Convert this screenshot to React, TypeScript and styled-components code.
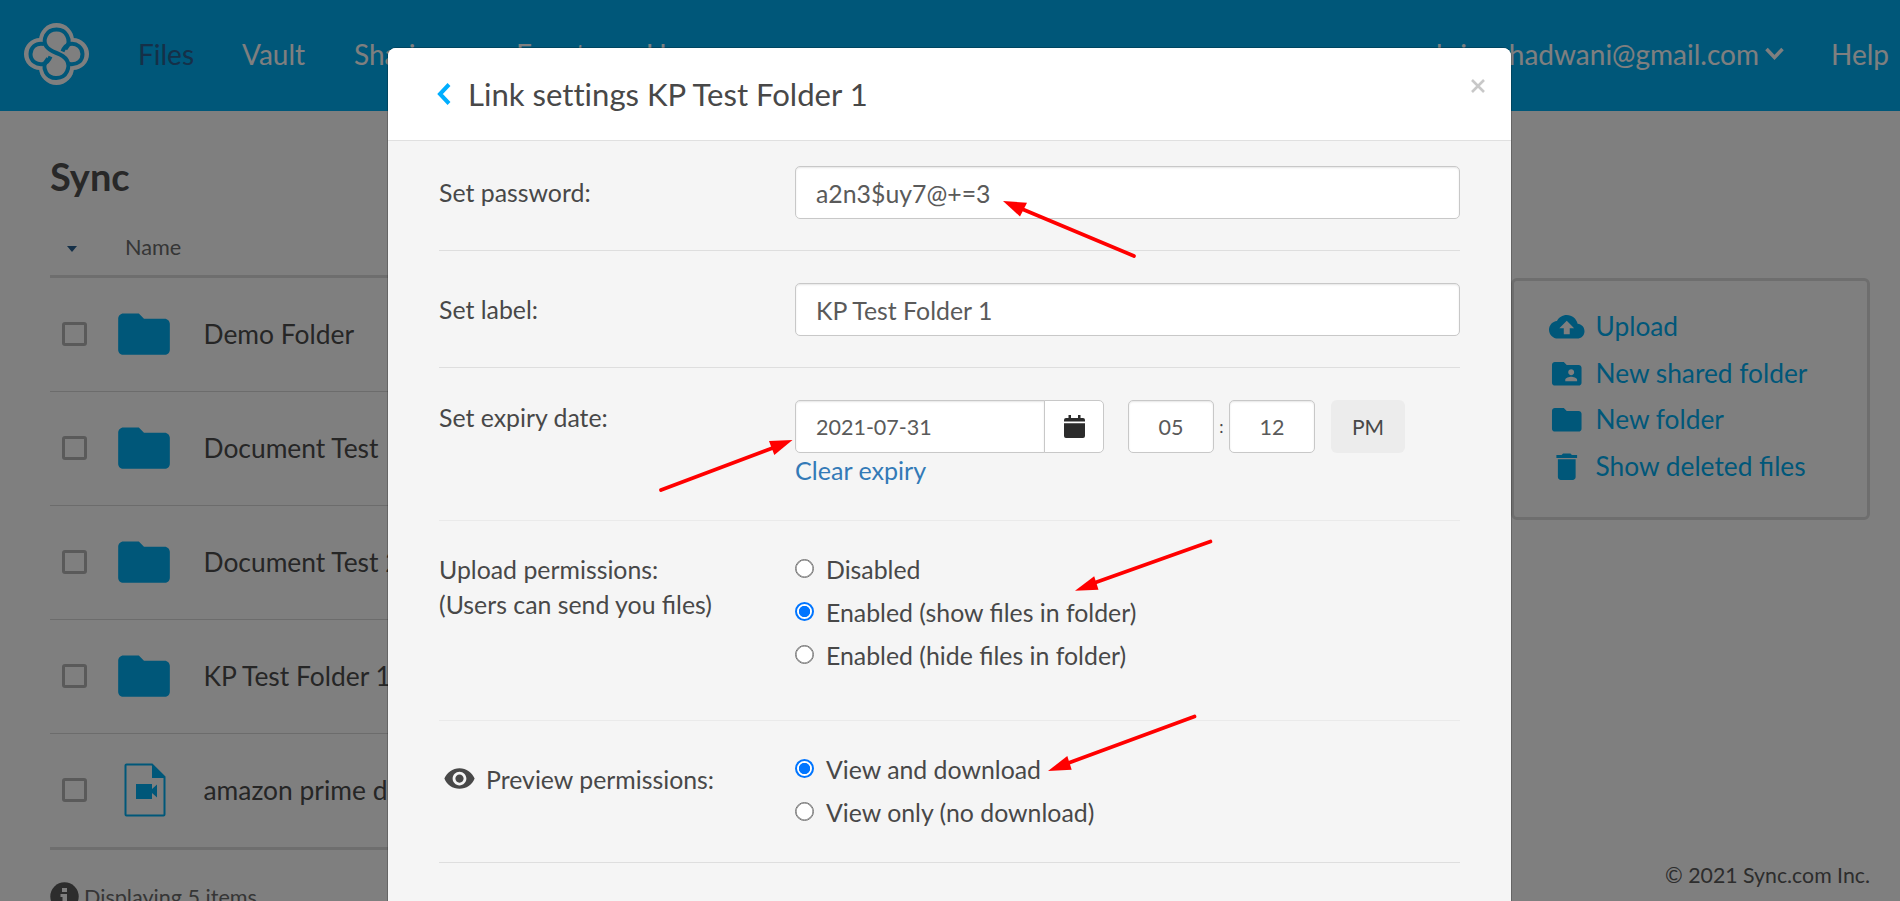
import React from "react";
import styled, { createGlobalStyle } from "styled-components";

const GlobalStyle = createGlobalStyle`
  *, *::before, *::after { box-sizing: border-box; }
  html, body { margin: 0; padding: 0; }
  body {
    font-family: Lato, "Liberation Sans", sans-serif;
    color: #484848;
    background: #fff;
    overflow: hidden;
  }
`;

const Page = styled.div`
  position: relative;
  width: 1900px;
  height: 901px;
  overflow: hidden;
  background: #fff;
`;

const TopBar = styled.header`
  display: flex;
  align-items: center;
  height: 111px;
  padding: 0 12px 3px 24px;
  background: #00aef3;
  color: #fff;
  font-size: 28px;
  line-height: 34px;
`;

const LogoSvg = styled.svg`
  width: 65px;
  height: 62px;
  margin-right: 49px;
  flex: none;
`;

const NavItem = styled.a<{ $active?: boolean; $width: number }>`
  flex: none;
  width: ${(p) => p.$width}px;
  color: ${(p) => (p.$active ? "#2a6090" : "#fff")};
  white-space: nowrap;
`;

const Account = styled.div`
  display: flex;
  align-items: center;
  gap: 6px;
  margin-left: auto;
  margin-right: 47px;
`;

const Main = styled.main`
  display: flex;
  justify-content: space-between;
  height: 790px;
  padding: 0 30px 0 50px;
`;

const FileArea = styled.section`
  width: 1420px;
  padding-top: 42px;
`;

const Heading = styled.h1`
  margin: 0;
  font-size: 38px;
  line-height: 46px;
  font-weight: 700;
  color: #505050;
`;

const ListHead = styled.div`
  display: flex;
  align-items: center;
  height: 79px;
  padding: 19px 0 0 17px;
  border-bottom: 3px solid #dcdcdc;
  font-size: 21.7px;
  color: #6c6c6c;
`;

const SortCaret = styled.span`
  width: 0;
  height: 0;
  margin: 4px 48px 0 0;
  border: 5px solid transparent;
  border-top: 6px solid #2a6090;
  border-bottom: 0;
`;

const FileRow = styled.div`
  display: flex;
  align-items: center;
  height: 114px;
  padding: 0 0 2px 12px;
  border-bottom: 1px solid #d8d8d8;
  font-size: 26.4px;
  color: #4c4c4c;
  white-space: nowrap;

  &:last-of-type {
    height: 116px;
    border-bottom: 3px solid #dcdcdc;
  }
`;

const Checkbox = styled.span`
  width: 25px;
  height: 24px;
  margin-right: 26px;
  border: 3px solid #b4b4b4;
  border-radius: 3px;
`;

const IconCell = styled.span<{ $document?: boolean }>`
  display: flex;
  align-items: center;
  justify-content: center;
  width: 62px;
  height: 64px;
  padding: ${(p) => (p.$document ? "1px 0 0 1px" : "2px 0 0")};
  margin-right: 28.5px;
`;

const ListFoot = styled.div`
  display: flex;
  align-items: center;
  gap: 5px;
  padding-top: 32px;
  font-size: 21.6px;
  line-height: 28px;
  color: #6c6c6c;
`;

const Side = styled.aside`
  display: flex;
  flex-direction: column;
  justify-content: space-between;
  width: 359px;
  padding: 167px 0 13px;
`;

const ActionBox = styled.nav`
  display: flex;
  flex-direction: column;
  height: 242px;
  padding: 22px 0 0 35px;
  border: 3px solid #dcdcdc;
  border-radius: 6px;
`;

const Action = styled.a`
  display: flex;
  align-items: center;
  gap: 11px;
  height: 46.6px;
  font-size: 26.3px;
  color: #00aef3;

  svg {
    flex: none;
    margin-top: 1px;
  }
`;

const Copyright = styled.p`
  margin: 0;
  font-size: 21.3px;
  line-height: 26px;
  text-align: right;
  color: #5a5a5a;
`;

const Backdrop = styled.div`
  position: absolute;
  inset: 0;
  padding: 48px 0 0 388px;
  background: rgba(0, 0, 0, 0.5);
`;

const Dialog = styled.div`
  width: 1123px;
  height: 1000px;
  border-radius: 8px 8px 0 0;
  background: #f5f5f5;
  box-shadow: 0 0 0 1px rgba(0, 0, 0, 0.2);
  overflow: hidden;
`;

const DialogHead = styled.div`
  display: flex;
  align-items: center;
  height: 93px;
  padding: 0 26px 0 49px;
  border-bottom: 1px solid #e0e0e0;
  background: #fff;
`;

const DialogTitle = styled.h2`
  flex: 1;
  margin: 0 0 0 17px;
  font-size: 31.1px;
  line-height: 36px;
  font-weight: 400;
  font-variant-ligatures: none;
`;

const CloseIcon = styled.svg`
  align-self: flex-start;
  margin-top: 31px;
`;

const DialogBody = styled.div`
  padding: 0 51px;
  font-size: 24.85px;
  line-height: 35px;
`;

const Setting = styled.div<{ $height: number; $top: number; $faint?: boolean }>`
  display: flex;
  height: ${(p) => p.$height}px;
  padding-top: ${(p) => p.$top}px;
  border-bottom: 1px solid ${(p) => (p.$faint ? "#eaeaea" : "#dedede")};
`;

const Label = styled.div<{ $top?: number; $icon?: boolean }>`
  display: flex;
  gap: 10px;
  flex: none;
  width: 356px;
  padding-top: ${(p) => p.$top ?? 0}px;
  padding-left: ${(p) => (p.$icon ? 4 : 0)}px;
  white-space: nowrap;
`;

const Field = styled.div`
  flex: 1;
`;

const TextInput = styled.input<{ $width?: number; $small?: boolean; $center?: boolean; $joined?: boolean }>`
  display: block;
  width: ${(p) => (p.$width ? `${p.$width}px` : "100%")};
  height: 53px;
  margin: 0;
  padding: ${(p) => (p.$center ? "0" : "0 20px")};
  border: 1px solid #c8c8c8;
  border-radius: ${(p) => (p.$joined ? "5px 0 0 5px" : "5px")};
  background: #fff;
  box-shadow: inset 0 1px 2px rgba(0, 0, 0, 0.1);
  font-family: inherit;
  font-size: ${(p) => (p.$small ? 21.5 : 24.85)}px;
  color: #5a5a5a;
  text-align: ${(p) => (p.$center ? "center" : "left")};
  outline: none;
`;

const DateRow = styled.div`
  display: flex;
  align-items: center;
`;

const CalendarButton = styled.button`
  display: flex;
  align-items: center;
  justify-content: center;
  width: 60px;
  height: 53px;
  margin: 0 24px 0 -1px;
  padding: 0;
  border: 1px solid #c8c8c8;
  border-radius: 0 5px 5px 0;
  background: #fff;
`;

const Colon = styled.span`
  width: 15px;
  font-size: 17px;
  text-align: center;
`;

const Meridiem = styled.button`
  width: 74px;
  height: 53px;
  margin-left: 16px;
  padding: 0;
  border: 0;
  border-radius: 6px;
  background: #ececec;
  font-family: inherit;
  font-size: 21px;
  color: #484848;
`;

const ClearLink = styled.a`
  display: block;
  font-size: 25.1px;
  color: #337ab7;
`;

const RadioRow = styled.label`
  display: flex;
  align-items: flex-start;
  gap: 12px;
  height: 43px;
  white-space: nowrap;
`;

const RadioDot = styled.span<{ $on?: boolean }>`
  display: flex;
  width: 19px;
  height: 19px;
  margin-top: 7px;
  border: ${(p) => (p.$on ? "2px solid #0075ff" : "1px solid #767676")};
  border-radius: 50%;
  background: ${(p) => (p.$on ? "radial-gradient(circle, #0075ff 5.3px, #fff 6px)" : "#fff")};
  box-shadow: ${(p) => (p.$on ? "none" : "inset 0 0 0 0.6px #767676")};
`;

const ArrowLayer = styled.svg`
  position: absolute;
  inset: 0;
  pointer-events: none;
`;

const FOLDER = "M10 4H4c-1.1 0-1.99.9-1.99 2L2 18c0 1.1.9 2 2 2h16c1.1 0 2-.9 2-2V8c0-1.1-.9-2-2-2h-8l-2-2z";
const ACTIONS = [
  { text: "Upload", d: "M19.35 10.04C18.67 6.59 15.64 4 12 4 9.11 4 6.6 5.64 5.35 8.04 2.34 8.36 0 10.91 0 14c0 3.31 2.69 6 6 6h13c2.76 0 5-2.24 5-5 0-2.64-2.05-4.78-4.65-4.96zM14 13v4h-4v-4H7l5-5 5 5h-3z" },
  { text: "New shared folder", d: "M20 6h-8l-2-2H4c-1.1 0-1.99.9-1.99 2L2 18c0 1.1.9 2 2 2h16c1.1 0 2-.9 2-2V8c0-1.1-.9-2-2-2zm-5 3c1.1 0 2 .9 2 2s-.9 2-2 2-2-.9-2-2 .9-2 2-2zm4 8h-8v-1c0-1.33 2.67-2 4-2s4 .67 4 2v1z" },
  { text: "New folder", d: FOLDER },
  { text: "Show deleted files", d: "M6 19c0 1.1.9 2 2 2h8c1.1 0 2-.9 2-2V7H6v12zM19 4h-3.500l-1-1h-5l-1 1H5v2h14V4z" },
];

const MaterialIcon = ({ d, size, color }: { d: string; size: number; color: string }) => (
  <svg width={size} height={size} viewBox="0 0 24 24" fill={color}>
    <path d={d} />
  </svg>
);

const VideoFileIcon = () => (
  <svg width="42" height="54" viewBox="0 0 42 54">
    <path d="M2.500 1.500H28L40.500 14V51.500a1 1 0 0 1-1 1H2.500a1 1 0 0 1-1-1V2.500a1 1 0 0 1 1-1Z" fill="none" stroke="#00aef3" strokeWidth="2" />
    <path d="M28 1V15H41Z" fill="#00aef3" />
    <path d="M12 21h16v5l5-4.500v13L28 30v6H12Z" fill="#00aef3" />
  </svg>
);

const Logo = () => (
  <LogoSvg viewBox="0 0 65 62">
    <g fill="#fff">
      <circle cx="32.500" cy="17.500" r="17.500" />
      <circle cx="32.500" cy="44.500" r="17.500" />
      <circle cx="16" cy="31" r="16" />
      <circle cx="49" cy="31" r="16" />
    </g>
    <g fill="none" stroke="#00aef3" strokeWidth="4">
      <path d="M41.500 26C45 22 45.500 17 43 12.500C39 4.500 26 4.500 22 12.500C18 21 23 26.500 32.500 30C42 33.500 47 39.500 43 48.500C39 57 26 57 22 49.500C19.500 45 20 40 24 35.500" />
      <path d="M20 21C11 19.500 6.500 25 6.500 31C6.500 38 12.500 42 19 41C22.500 40 25 37.500 26.500 33.500" />
      <path d="M38.500 28.500C40 24.500 42.500 22 46 21C53 20 58.500 24.500 58.500 31C58.500 37.500 54 42 45.500 41" />
    </g>
  </LogoSvg>
);

const FILES = [
  { name: "Demo Folder" },
  { name: "Document Test" },
  { name: "Document Test 2" },
  { name: "KP Test Folder 1" },
  { name: "amazon prime deal", video: true },
];

const ARROWS = [
  { line: [1022, 209, 1134, 256], head: "1003,201 1027,202.700 1020,216.500" },
  { line: [774, 447.500, 661, 490], head: "792.500,440 769,441 774.300,455" },
  { line: [1094, 583, 1210.500, 541.500], head: "1075,590.700 1094.200,576.300 1098.500,589.700" },
  { line: [1067, 763.500, 1194.500, 716.500], head: "1048,771 1067.300,756 1071.700,769.700" },
];

const Radio = ({ text, on }: { text: string; on?: boolean }) => (
  <RadioRow>
    <RadioDot $on={on} />
    {text}
  </RadioRow>
);

export default function App() {
  return (
    <Page>
      <GlobalStyle />
      <TopBar>
        <Logo />
        <NavItem $active $width={104}>Files</NavItem>
        <NavItem $width={112}>Vault</NavItem>
        <NavItem $width={162}>Sharing</NavItem>
        <NavItem $width={130}>Events</NavItem>
        <NavItem $width={100}>Users</NavItem>
        <Account>
          kripashadwani@gmail.com
          <svg width="19" height="14" viewBox="0 0 19 14" fill="none" stroke="#fff" strokeWidth="3.500">
            <path d="M1.500 2l8 8.500 8-8.500" />
          </svg>
        </Account>
        <NavItem $width={57}>Help</NavItem>
      </TopBar>
      <Main>
        <FileArea>
          <Heading>Sync</Heading>
          <ListHead>
            <SortCaret />
            Name
          </ListHead>
          <div>
            {FILES.map((f) => (
              <FileRow key={f.name}>
                <Checkbox />
                <IconCell $document={f.video}>
                  {f.video ? <VideoFileIcon /> : <MaterialIcon d={FOLDER} size={62.4} color="#00aef3" />}
                </IconCell>
                {f.name}
              </FileRow>
            ))}
          </div>
          <ListFoot>
            <svg width="29" height="29" viewBox="0 0 29 29">
              <circle cx="14.500" cy="14.500" r="14.200" fill="#5a5a5a" />
              <path d="M12 6h5v4h-5zM10.500 12h6.500v8h2v3h-8.500v-3h2v-5h-2z" fill="#fff" />
            </svg>
            Displaying 5 items
          </ListFoot>
        </FileArea>
        <Side>
          <ActionBox>
            {ACTIONS.map((a) => (
              <Action key={a.text}>
                <MaterialIcon d={a.d} size={35.5} color="#00aef3" />
                {a.text}
              </Action>
            ))}
          </ActionBox>
          <Copyright>© 2021 Sync.com Inc.</Copyright>
        </Side>
      </Main>
      <Backdrop>
        <Dialog>
          <DialogHead>
            <svg width="14" height="22" viewBox="0 0 14 22" fill="none" stroke="#00aeff" strokeWidth="4">
              <path d="M12 1.500L3 11l9 9.500" />
            </svg>
            <DialogTitle>Link settings KP Test Folder 1</DialogTitle>
            <CloseIcon width="14" height="14" viewBox="0 0 14 14" stroke="#c8c8c8" strokeWidth="2.600">
              <path d="M1 1l12 12M13 1L1 13" />
            </CloseIcon>
          </DialogHead>
          <DialogBody>
            <Setting $height={110} $top={25}>
              <Label $top={9}>Set password:</Label>
              <Field><TextInput readOnly value="a2n3$uy7@+=3" /></Field>
            </Setting>
            <Setting $height={117} $top={32}>
              <Label $top={9}>Set label:</Label>
              <Field><TextInput readOnly value="KP Test Folder 1" /></Field>
            </Setting>
            <Setting $height={153} $top={32} $faint>
              <Label>Set expiry date:</Label>
              <Field>
                <DateRow>
                  <TextInput readOnly $width={250} $small $joined value="2021-07-31" />
                  <CalendarButton aria-label="Pick a date">
                    <svg width="21" height="23" viewBox="0 0 21 23" fill="#2b2b2b">
                      <path d="M0 6.500V5a2 2 0 0 1 2-2h2.500V0H7v3h7V0h2.500v3H19a2 2 0 0 1 2 2v1.500ZM0 8.300h21V21a2 2 0 0 1-2 2H2a2 2 0 0 1-2-2Z" />
                    </svg>
                  </CalendarButton>
                  <TextInput readOnly $width={86} $small $center value="05" />
                  <Colon>:</Colon>
                  <TextInput readOnly $width={86} $small $center value="12" />
                  <Meridiem>PM</Meridiem>
                </DateRow>
                <ClearLink>Clear expiry</ClearLink>
              </Field>
            </Setting>
            <Setting $height={200} $top={31} $faint>
              <Label>Upload permissions:<br />(Users can send you files)</Label>
              <Field>
                <Radio text="Disabled" />
                <Radio text="Enabled (show files in folder)" on />
                <Radio text="Enabled (hide files in folder)" />
              </Field>
            </Setting>
            <Setting $height={142} $top={31}>
              <Label $top={10} $icon>
                <MaterialIcon d="M12 4.500C7 4.500 2.730 7.610 1 12c1.730 4.390 6 7.500 11 7.500s9.270-3.110 11-7.500c-1.730-4.390-6-7.500-11-7.500zM12 17c-2.760 0-5-2.240-5-5s2.240-5 5-5 5 2.240 5 5-2.240 5-5 5zm0-8c-1.660 0-3 1.340-3 3s1.340 3 3 3 3-1.340 3-3-1.340-3-3-3z" size={33} color="#484848" />
                Preview permissions:
              </Label>
              <Field>
                <Radio text="View and download" on />
                <Radio text="View only (no download)" />
              </Field>
            </Setting>
          </DialogBody>
        </Dialog>
      </Backdrop>
      <ArrowLayer width="1900" height="901" viewBox="0 0 1900 901">
        {ARROWS.map(({ line: [x1, y1, x2, y2], head }) => (
          <g key={head} fill="#f00" stroke="#f00">
            <line x1={x1} y1={y1} x2={x2} y2={y2} strokeWidth="3.700" strokeLinecap="round" />
            <polygon points={head} stroke="none" />
          </g>
        ))}
      </ArrowLayer>
    </Page>
  );
}
